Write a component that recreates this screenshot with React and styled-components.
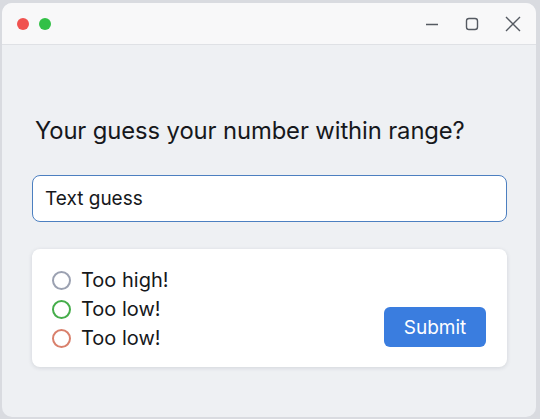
import React from 'react'
import styled, { createGlobalStyle } from 'styled-components'

const GlobalStyle = createGlobalStyle`
  html, body {
    margin: 0;
    padding: 0;
    background: #d9dbe0;
    font-family: Inter, "Noto Sans", sans-serif;
  }
`

const Window = styled.div`
  box-sizing: border-box;
  width: 534px;
  height: 414px;
  margin: 3px 0 0 2px;
  border-radius: 10px;
  overflow: hidden;
  background: #eef0f3;
  display: flex;
  flex-direction: column;
`

const TitleBar = styled.div`
  height: 41px;
  background: #f8f8f9;
  border-bottom: 1px solid #dfe1e5;
  display: flex;
  align-items: center;
  justify-content: space-between;
  padding: 0 14px 0 15px;
  flex-shrink: 0;
`

const Lights = styled.div`
  display: flex;
  gap: 10px;
`

const Light = styled.span`
  width: 12px;
  height: 12px;
  border-radius: 50%;
  background: ${p => p.color};
`

const Controls = styled.div`
  display: flex;
  align-items: center;
  gap: 24px;
  color: #555a62;
`

const Body = styled.div`
  padding: 71px 29px 0 30px;
  display: flex;
  flex-direction: column;
`

const Heading = styled.h1`
  margin: 0 0 30px 3px;
  font-size: 23.8px;
  font-weight: 400;
  color: #16181c;
  letter-spacing: -0.1px;
`

const Input = styled.input`
  box-sizing: border-box;
  height: 47px;
  width: 100%;
  border: 1.5px solid #4c7fc0;
  border-radius: 8px;
  background: #fff;
  padding: 0 12px;
  font-family: inherit;
  font-size: 19px;
  color: #16181c;
  outline: none;
  &::placeholder { color: #16181c; }
`

const Card = styled.div`
  margin-top: 27px;
  height: 118px;
  background: #fff;
  border-radius: 8px;
  box-shadow: 0 1px 4px rgba(40, 50, 70, 0.14);
  display: flex;
  align-items: center;
  justify-content: space-between;
  padding: 0 21px 0 20px;
  box-sizing: border-box;
`

const Options = styled.div`
  display: flex;
  flex-direction: column;
  gap: 4px;
  padding-top: 2px;
`

const Option = styled.label`
  display: flex;
  align-items: center;
  gap: 10px;
  font-size: 20px;
  color: #16181c;
  line-height: 25px;
`

const Ring = styled.span`
  box-sizing: border-box;
  width: 19px;
  height: 19px;
  border-radius: 50%;
  border: 2px solid ${p => p.color};
`

const Button = styled.button`
  margin-top: 38px;
  width: 102px;
  height: 40px;
  border: none;
  border-radius: 6px;
  background: #3a7ddf;
  color: #fff;
  font-family: inherit;
  font-size: 19px;
`

export default function App() {
  return (
    <>
      <GlobalStyle />
      <Window>
        <TitleBar>
          <Lights>
            <Light color="#f0524f" />
            <Light color="#32c046" />
          </Lights>
          <Controls>
            <svg width="16" height="16" viewBox="0 0 16 16">
              <path d="M2 8.5h12" stroke="currentColor" strokeWidth="1.4" />
            </svg>
            <svg width="16" height="16" viewBox="0 0 16 16">
              <rect x="2.5" y="2.5" width="11" height="11" rx="2.5" fill="none" stroke="currentColor" strokeWidth="1.4" />
            </svg>
            <svg width="18" height="18" viewBox="0 0 18 18">
              <path d="M2 2l14 14M16 2L2 16" stroke="currentColor" strokeWidth="1.4" />
            </svg>
          </Controls>
        </TitleBar>
        <Body>
          <Heading>Your guess your number within range?</Heading>
          <Input placeholder="Text guess" />
          <Card>
            <Options>
              <Option><Ring color="#9ba1b1" />Too high!</Option>
              <Option><Ring color="#45ad4a" />Too low!</Option>
              <Option><Ring color="#d9806c" />Too low!</Option>
            </Options>
            <Button>Submit</Button>
          </Card>
        </Body>
      </Window>
    </>
  )
}
